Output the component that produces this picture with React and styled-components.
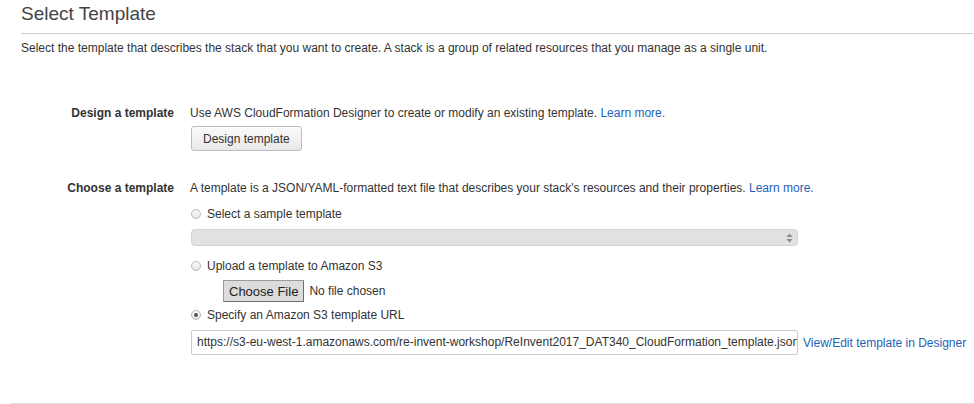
import styled, {createGlobalStyle} from 'styled-components'

const GlobalStyle = createGlobalStyle`
  body {
    margin: 0;
    background: #fff;
    font-family: "Liberation Sans", Arial, Helvetica, sans-serif;
    color: #333;
  }
`

const Page = styled.div`
  display: flex;
  flex-direction: column;
  width: 974px;
  height: 404px;
  overflow: hidden;
  font-size: 12px;
  line-height: 16px;
`

const Header = styled.div`
  margin-left: 21px;
  margin-right: 1px;
  padding: 3px 0 8px;
  border-bottom: 1px solid #cfcfcf;
  font-size: 19px;
  line-height: 22px;
  color: #444;
`

const Intro = styled.p`
  margin: 6px 0 0 21px;
`

const Section = styled.div`
  display: grid;
  grid-template-columns: 174px 1fr;
  column-gap: 16px;
  margin-top: ${p => p.$top}px;
`

const Label = styled.div`
  text-align: right;
  font-weight: bold;
  white-space: nowrap;
`

const Body = styled.div`
  display: flex;
  flex-direction: column;
  align-items: flex-start;
`

const Link = styled.a`
  color: #1e62b8;
  text-decoration: none;
  cursor: pointer;
`

const Button = styled.button`
  margin: 5px 0 0 1px;
  height: 25px;
  padding: 0 11px;
  border: 1px solid #bdbdbd;
  border-radius: 3px;
  background: linear-gradient(#fbfbfb, #e8e8e8);
  font: inherit;
  color: #333;
`

const RadioRow = styled.label`
  display: flex;
  align-items: center;
  gap: 6px;
  margin: ${p => p.$top}px 0 0 1px;
`

const RadioDot = styled.span`
  position: relative;
  width: 10px;
  height: 10px;
  box-sizing: border-box;
  border-radius: 50%;
  border: 1px solid #b8b8b8;
  background: linear-gradient(#fdfdfd, #e6e6e6);

  &::after {
    content: '';
    display: ${p => (p.$checked ? 'block' : 'none')};
    position: absolute;
    left: 2px;
    top: 2px;
    width: 4px;
    height: 4px;
    border-radius: 50%;
    background: #555;
  }
`

const SelectBar = styled.div`
  position: relative;
  margin: 7px 0 0 1px;
  width: 607px;
  height: 17px;
  box-sizing: border-box;
  border: 1px solid #d2d2d2;
  border-radius: 4px;
  background: #e1e1e1;
`

const Arrows = styled.svg`
  position: absolute;
  right: 4px;
  top: 3px;
`

const FileRow = styled.div`
  display: flex;
  align-items: center;
  gap: 5px;
  margin: 6px 0 0 33px;
`

const FileButton = styled.button`
  height: 22px;
  padding: 0 5px;
  border: 1px solid #9a9a9a;
  border-right-color: #6f6f6f;
  border-bottom-color: #6f6f6f;
  border-radius: 1px;
  background: #dcdcdc;
  font: 13px "Liberation Sans", Arial, sans-serif;
  color: #222;
`

const UrlRow = styled.div`
  display: flex;
  align-items: center;
  gap: 5px;
  margin: 7px 0 0 1px;
`

const UrlInput = styled.div`
  width: 607px;
  height: 25px;
  box-sizing: border-box;
  padding: 0 5px;
  border: 1px solid #cccccc;
  border-radius: 2px;
  line-height: 23px;
  white-space: nowrap;
  overflow: hidden;
`

const Footer = styled.div`
  margin: auto 0 0 11px;
  border-top: 1px solid #dcdcdc;
`

export default function App () {
  return (
    <Page>
      <GlobalStyle/>
      <Header>Select Template</Header>
      <Intro>
        Select the template that describes the stack that you want to create. A stack is a group of related resources that you manage as a single unit.
      </Intro>

      <Section $top={49}>
        <Label>Design a template</Label>
        <Body>
          <div>
            Use AWS CloudFormation Designer to create or modify an existing template. <Link>Learn more.</Link>
          </div>
          <Button>Design template</Button>
        </Body>
      </Section>

      <Section $top={29}>
        <Label>Choose a template</Label>
        <Body>
          <div>
            A template is a JSON/YAML-formatted text file that describes your stack's resources and their properties. <Link>Learn more.</Link>
          </div>

          <RadioRow $top={10}>
            <RadioDot/>
            Select a sample template
          </RadioRow>
          <SelectBar>
            <Arrows width='7' height='10' viewBox='0 0 7 10'>
              <path d='M3.5 0.5 L6.5 4 L0.5 4 Z M3.5 9.5 L6.5 6 L0.5 6 Z' fill='#8a8a8a'/>
            </Arrows>
          </SelectBar>

          <RadioRow $top={12}>
            <RadioDot/>
            Upload a template to Amazon S3
          </RadioRow>
          <FileRow>
            <FileButton>Choose File</FileButton>
            No file chosen
          </FileRow>

          <RadioRow $top={5}>
            <RadioDot $checked/>
            Specify an Amazon S3 template URL
          </RadioRow>
          <UrlRow>
            <UrlInput>https://s3-eu-west-1.amazonaws.com/re-invent-workshop/ReInvent2017_DAT340_CloudFormation_template.json</UrlInput>
            <Link>View/Edit template in Designer</Link>
          </UrlRow>
        </Body>
      </Section>

      <Footer/>
    </Page>
  )
}
